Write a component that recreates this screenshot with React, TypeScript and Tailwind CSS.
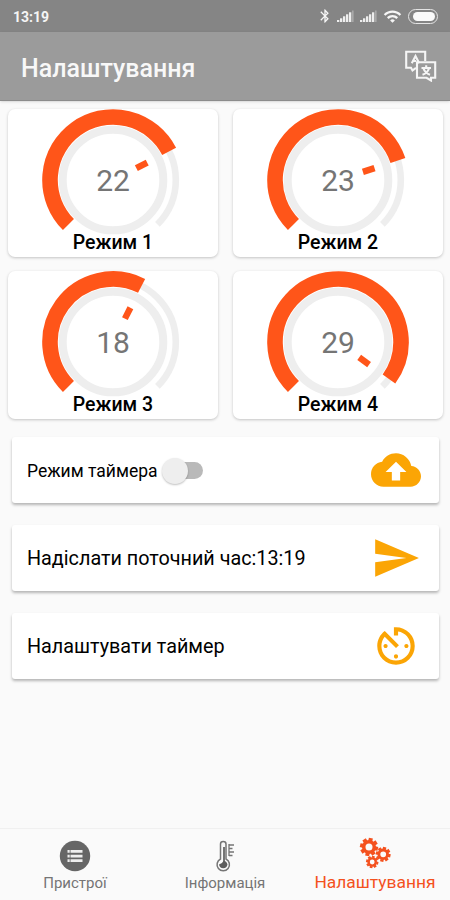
import { MdAvTimer, MdBluetooth, MdCloudUpload, MdSend, MdWifi } from 'react-icons/md';

const MODES = [
  { name: 'Режим 1', temp: 22 },
  { name: 'Режим 2', temp: 23 },
  { name: 'Режим 3', temp: 18 },
  { name: 'Режим 4', temp: 29 },
];

const MAX_TEMP = 30;

// angle in degrees, clockwise from 12 o'clock
function point(r: number, angle: number) {
  const a = (angle * Math.PI) / 180;
  return `${(71 + r * Math.sin(a)).toFixed(2)} ${(71 - r * Math.cos(a)).toFixed(2)}`;
}

function arc(r: number, from: number, to: number) {
  return `M${point(r, from)} A${r} ${r} 0 ${to - from > 180 ? 1 : 0} 1 ${point(r, to)}`;
}

function Gauge({ temp }: { temp: number }) {
  const angle = (temp / MAX_TEMP) * 270 - 135;
  return (
    <svg className="w-[142px] h-[126px]" viewBox="0 0 142 126" fill="none">
      <circle cx="71" cy="71" r="50.3" stroke="#eeeeee" strokeWidth="8" />
      <path d={arc(62.8, -135, 135)} stroke="#eeeeee" strokeWidth="6.6" />
      <path d={arc(63, -135, angle)} stroke="#ff5519" strokeWidth="15.6" />
      <path d={`M${point(26.2, angle)} L${point(38.4, angle)}`} stroke="#ff5519" strokeWidth="6.4" />
      <text x="71" y="81.5" textAnchor="middle" fontSize="30" fill="#757575">{temp}</text>
    </svg>
  );
}

function Signal() {
  return (
    <svg className="w-[17px] h-[14px]" viewBox="0 0 17 14" fill="#eeeeee">
      <rect x="0" y="11" width="2.3" height="2" />
      <rect x="3" y="9.3" width="2.3" height="3.7" />
      <rect x="6" y="7.3" width="2.3" height="5.7" />
      <rect x="9" y="5.3" width="2.3" height="7.7" />
      <rect x="12" y="3.3" width="2.3" height="9.7" />
      <rect x="15" y="1.5" width="1.6" height="11.5" opacity="0.35" />
    </svg>
  );
}

function TranslateIcon() {
  return (
    <svg className="w-8 h-8" viewBox="0 0 32 32" fill="none" stroke="#f5f5f5" strokeWidth="2.1">
      <path d="M11 17.8 L7.5 20.5 L6 17.8 H1.2 V1.8 H20.2 V11" />
      <path d="M12 12.2 H30.2 V27.8 H26 V30.5 L21.5 27.8 H12 Z" />
      <path d="M6.8 13.2 L10.5 6 L14.2 13.2 M8 11 H11" />
      <path d="M16.5 18 H26 M21.2 15.2 V18 M24 18.5 Q22.5 23 17.5 24.8 M18.5 18.5 Q20 23 25 24.8" />
    </svg>
  );
}

function Cog({ x, y, r }: { x: number; y: number; r: number }) {
  return (
    <g transform={`translate(${x} ${y}) scale(${r / 10})`} stroke="#f4511e">
      <circle r="6" strokeWidth="4" />
      {[0, 45, 90, 135, 180, 225, 270, 315].map(a => (
        <path key={a} d="M0 -7 V-10.3" strokeWidth="4.6" transform={`rotate(${a + 12})`} />
      ))}
    </g>
  );
}

function CogsIcon() {
  return (
    <svg className="w-8 h-8" viewBox="0 0 32 32" fill="none">
      <Cog x={10} y={10} r={8.8} />
      <Cog x={24.2} y={17.3} r={7.2} />
      <Cog x={13.2} y={25} r={6} />
    </svg>
  );
}

function ListIcon() {
  return (
    <svg className="w-8 h-8" viewBox="0 0 32 32">
      <circle cx="16" cy="16" r="15.2" fill="#666666" />
      <path
        d="M8.5 10h2.2v2.7H8.5zM11.5 10h12v2.7h-12zM8.5 14.7h2.2v2.7H8.5zM11.5 14.7h12v2.7h-12zM8.5 19.3h2.2V22H8.5zM11.5 19.3h12V22h-12z"
        fill="#eeeeee"
      />
    </svg>
  );
}

function ThermometerIcon() {
  return (
    <svg className="w-8 h-8" viewBox="0 0 32 32" fill="none" stroke="#757575" strokeWidth="1.5">
      <path d="M11.5 19 V4 Q11.5 1.5 14.2 1.5 Q17 1.5 17 4 V19 A6.2 6.2 0 1 1 11.5 19 Z" />
      <path d="M15 7 V22" strokeWidth="2" />
      <path d="M10 24.5 A4.3 4.3 0 0 0 18.5 24.5 Q17.5 20.5 14.5 21 Q13 24 10 24.5 Z" fill="#5c5c5c" stroke="none" />
      <path d="M20 4 V16 M20 5 H25 M20 8.5 H23.5 M20 12 H25 M20 15.5 H23.5" strokeWidth="1.3" />
    </svg>
  );
}

export default function App() {
  return (
    <div className="flex flex-col w-[450px] h-[900px] bg-[#fafafa] font-[Roboto,sans-serif] text-black overflow-hidden">
      {/* Status bar */}
      <div className="flex items-center h-8 shrink-0 bg-[#858585] pl-[13px] pr-3 text-[#f5f5f5]">
        <span className="flex-1 text-[14px] font-bold leading-8 pt-px">13:19</span>
        <MdBluetooth className="w-[16px] h-[16px] mr-[4px]" />
        <Signal />
        <div className="w-[6px]" />
        <Signal />
        <MdWifi className="w-[19px] h-[19px] ml-[6px] mr-[6px]" />
        <div className="w-[30px] h-[15px] rounded-full border-[1.5px] border-[#e4e4e4] p-[2px]">
          <div className="ml-[2px] h-full rounded-full bg-[#fafafa]" />
        </div>
      </div>

      {/* Title bar */}
      <div className="flex items-center justify-between h-[69px] shrink-0 bg-[#9b9b9b] pl-[21px] pr-[13px] border-b border-[#8c8c8c] shadow-sm">
        <h1 className="text-[25px] font-medium text-[#f8f8f8] whitespace-nowrap pt-[5px]">Налаштування</h1>
        <TranslateIcon />
      </div>

      {/* Modes */}
      <div className="grid grid-cols-2 gap-x-[15px] gap-y-[14px] pl-2 pr-[7px] pt-2">
        {MODES.map(m => (
          <div key={m.name} className="flex flex-col items-center h-[148px] rounded-[7px] bg-white shadow-[0_1px_3px_rgba(0,0,0,0.22)]">
            <Gauge temp={m.temp} />
            <p className="text-[19.5px] leading-6 -mt-1 font-medium whitespace-nowrap">{m.name}</p>
          </div>
        ))}
      </div>

      {/* Timer actions */}
      <div className="flex flex-col gap-[22px] pl-3 pr-[11px] pt-[18px]">
        <div className="flex items-center h-[66px] rounded-[3px] bg-white pl-[15px] pr-[18.5px] shadow-[0_2px_3px_rgba(0,0,0,0.28)]">
          <span className="text-[17.5px] pt-0.5 whitespace-nowrap">Режим таймера</span>
          <div className="flex items-center ml-[4px] mt-px w-[42px] h-[26px]">
            <div className="w-[26px] h-[26px] shrink-0 rounded-full bg-[#eeeeee] shadow-[0_1px_2px_rgba(0,0,0,0.25)] z-10" />
            <div className="w-[27px] h-[17px] -ml-[12px] rounded-full bg-[#b9b9b9]" />
          </div>
          <MdCloudUpload className="ml-auto w-[50px] h-[50px] text-[#fba505]" />
        </div>
        <div className="flex items-center justify-between h-[66px] rounded-[3px] bg-white pl-[15px] pr-[18.5px] shadow-[0_2px_3px_rgba(0,0,0,0.28)]">
          <span className="text-[19.8px] pt-0.5 whitespace-nowrap">Надіслати поточний час:13:19</span>
          <MdSend className="w-[50px] h-[50px] text-[#fba505]" />
        </div>
        <div className="flex items-center justify-between h-[66px] rounded-[3px] bg-white pl-[15px] pr-[18.5px] shadow-[0_2px_3px_rgba(0,0,0,0.28)]">
          <span className="text-[19.8px] pt-0.5 whitespace-nowrap">Налаштувати таймер</span>
          <MdAvTimer className="w-[50px] h-[50px] text-[#fba505]" />
        </div>
      </div>

      {/* Bottom navigation */}
      <div className="grid grid-cols-3 mt-auto h-[72px] border-t border-[#f0f0f0] text-[#757575]">
        <div className="flex flex-col items-center pt-[11px]">
          <ListIcon />
          <span className="text-[15px] leading-[22px]">Пристрої</span>
        </div>
        <div className="flex flex-col items-center pt-[11px]">
          <ThermometerIcon />
          <span className="text-[15px] leading-[22px]">Інформація</span>
        </div>
        <div className="flex flex-col items-center pt-[8px] text-[#f4511e]">
          <CogsIcon />
          <span className="text-[17.4px] leading-[26px]">Налаштування</span>
        </div>
      </div>
    </div>
  );
}
